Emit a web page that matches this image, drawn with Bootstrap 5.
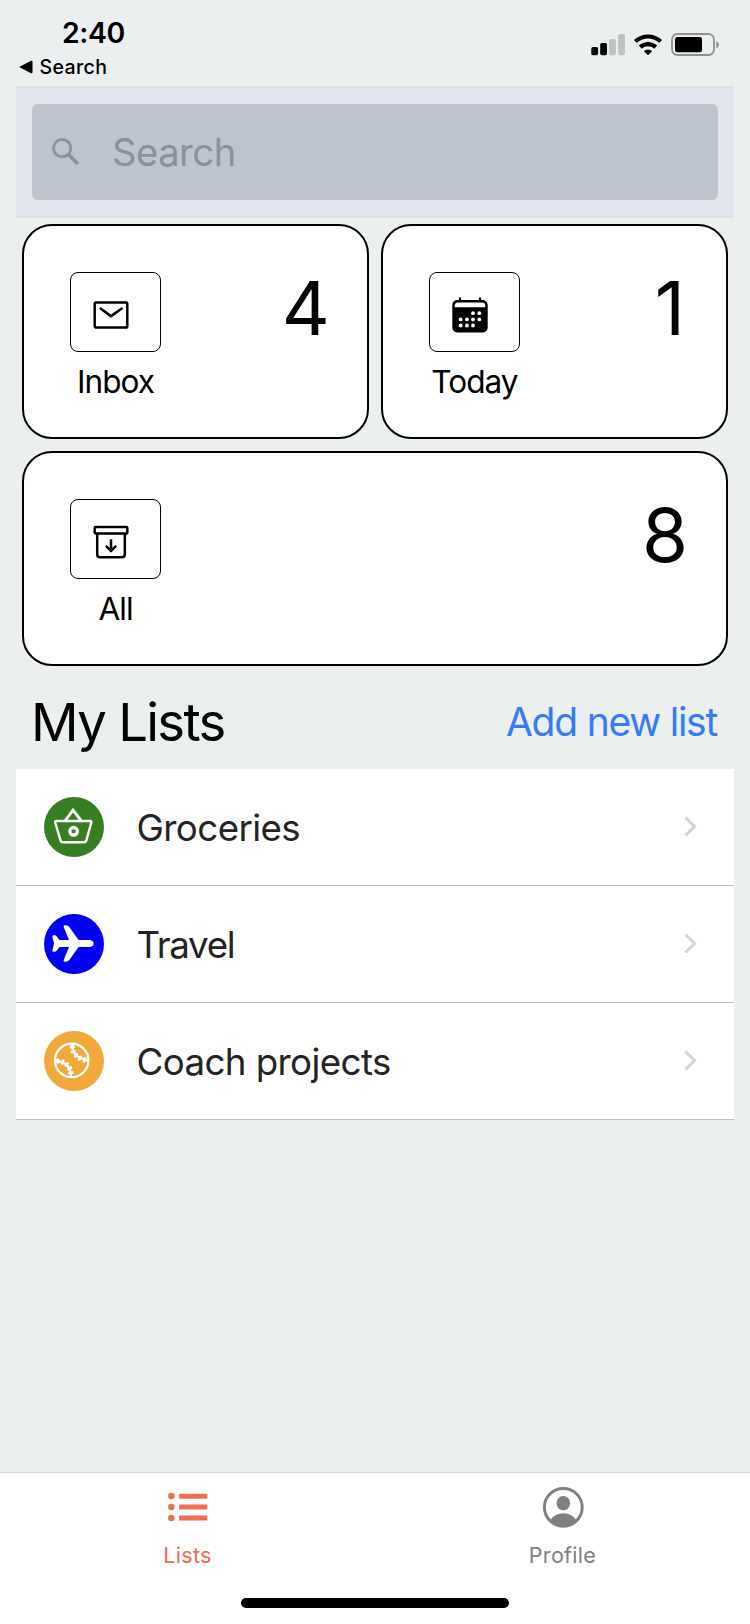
<!DOCTYPE html>
<html lang="en">
<head>
<meta charset="utf-8">
<meta name="viewport" content="width=device-width, initial-scale=1">
<title>My Lists</title>
<link rel="stylesheet" href="https://cdn.jsdelivr.net/npm/bootstrap@5.3.0/dist/css/bootstrap.min.css">
<style>
  body { background: #ebeff0; color: #000; font-family: Inter, "Liberation Sans", sans-serif; }
  svg { display: block; flex: none; }
  .status { height: 86px; padding: 15px 30px 0 19px; }
  .clock { font-size: 28.5px; font-weight: 600; line-height: 36px; padding-left: 43px; letter-spacing: -.44px; }
  .back-app { font-size: 19.5px; font-weight: 500; line-height: 24px; margin-top: 4px; gap: 6.500px; letter-spacing: .4px; }
  .status-icons { margin-top: 17px; }
  .search-wrap { background: #e1e6ee; border: solid #dfe1e4; border-width: 2px 0; height: 132px; padding: 16px; }
  .search-box { background: #bdc4cf; border-radius: 6px; height: 96px; padding: 0 19px; gap: 31px; color: #88929c; font-size: 38.2px; letter-spacing: -.5px; }
  .search-box span { padding-top: 1px; }
  .tiles { padding: 6px; }
  .tiles, .tiles-row { gap: 12px; }
  .tile { background: #fff; border: 2px solid #000; border-radius: 30px; height: 215px; padding: 46px 38px 0 46px; }
  .tile-inbox { padding-right: 37px; }
  .tile-today { padding-right: 41px; }
  .tile-icon { width: 91px; height: 80px; border: 1px solid #000; border-radius: 8px; padding: 22px 20px; }
  .tile-name { font-size: 31.6px; line-height: 40px; margin-top: 10px; letter-spacing: -1px; }
  .tile-count { font-size: 74.5px; line-height: 72px; }
  .lists-head { height: 97px; padding: 2px 17px 0 15px; }
  .lists-title { font-size: 52.7px; line-height: 60px; font-weight: 400; letter-spacing: -1.700px; }
  .add-link { font-size: 39px; color: #347bf7; line-height: 60px; letter-spacing: -1.230px; }
  .list-row { height: 117px; border: 0; border-bottom: 1px solid #bcbbc1; background: #fff; color: #242424; padding: 0 37px 0 28px; font-size: 36.7px; letter-spacing: -.6px; }
  .list-row span { padding-top: 2px; }
  .row-icon { width: 60px; height: 60px; margin-right: 32.500px; }
  .row-travel { letter-spacing: -1.300px; }
  .tabs { height: 152px; background: #fff; border-top: 1px solid #d8d8d8; }
  .tab-item { font-size: 21.5px; line-height: 28px; color: #808080; padding-top: 13px; gap: 13px; letter-spacing: .3px; }
  .tab-item.active { color: #ee6e50; }
  .home-bar { width: 268px; height: 10px; border-radius: 5px; background: #000; margin-bottom: 16px; }
</style>
</head>
<body>
<div class="d-flex flex-column vh-100 overflow-hidden">
  <header class="status d-flex justify-content-between align-items-start">
    <div>
      <div class="clock">2:40</div>
      <div class="back-app d-flex align-items-center">
        <svg width="14" height="14" viewBox="0 0 14 14"><path d="M1 6.4 12 .8q1.500-.6 1.500 1v10.400q0 1.600-1.500 1L1 7.600q-1-.6 0-1.200z"/></svg>
        <span>Search</span>
      </div>
    </div>
    <svg class="status-icons" width="130" height="26" viewBox="590 32 130 26">
      <rect x="591.3" y="47" width="6.800" height="8.300" rx="1.800"/>
      <rect x="600.2" y="43" width="6.800" height="12.300" rx="1.800"/>
      <g fill="#bfc1c2"><rect x="609.1" y="39" width="6.800" height="16.300" rx="1.800"/><rect x="618.2" y="34" width="6.800" height="21.300" rx="1.800"/></g>
      <g fill="none" stroke="#000" stroke-width="4.200"><path d="M635.3 41.600a18.400 18.400 0 0 1 25.400 0"/><path d="M640.300 47.100a11.400 11.400 0 0 1 15.400 0"/></g>
      <path d="M643.800 51q4.200-3 8.400 0l-3.300 3.500q-.9.800-1.800 0z"/>
      <rect x="672" y="34" width="42" height="21" rx="5.500" fill="none" stroke="#8f9192" stroke-width="1.800"/>
      <rect x="675" y="37" width="27" height="15.300" rx="2.500"/>
      <path d="M716.300 41.200q2.700 1.200 2.700 3.500t-2.700 3.500z" fill="#8f9192"/>
    </svg>
  </header>

  <main class="px-3 flex-grow-1">
    <div class="search-wrap">
      <div class="search-box d-flex align-items-center">
        <svg width="30" height="30" viewBox="0 0 30 30" fill="none" stroke="#88929c"><circle cx="11.200" cy="11.200" r="8.700" stroke-width="2.800"/><path d="m17 17 9.700 9.700" stroke-width="3.500"/></svg>
        <span>Search</span>
      </div>
    </div>

    <div class="tiles d-flex flex-column">
      <div class="tiles-row d-flex">
        <div class="tile tile-inbox d-flex justify-content-between align-items-start w-50">
          <div class="text-center">
            <div class="tile-icon"><svg width="40" height="40" viewBox="0 0 40 40" fill="none" stroke="#000" stroke-width="2.500"><rect x="3.700" y="7.500" width="32.600" height="25" rx="1.600"/><path d="m8.800 12.900 11.200 8.200 11.500-8.200"/></svg></div>
            <div class="tile-name">Inbox</div>
          </div>
          <div class="tile-count">4</div>
        </div>
        <div class="tile tile-today d-flex justify-content-between align-items-start w-50">
          <div class="text-center">
            <div class="tile-icon"><svg width="40" height="40" viewBox="0 0 40 40"><path d="M10 2.500V7M30 2.500V7" stroke="#000" stroke-width="2.200"/><rect x="2.300" y="5" width="35.400" height="32.400" rx="5"/><path d="M4.700 12.300v-1.300q0-3.400 3.400-3.400h23.800q3.400 0 3.400 3.400v1.300z" fill="#fff"/><g fill="#fff"><circle cx="23" cy="18.200" r="1.900"/><circle cx="29.300" cy="18.200" r="1.900"/><circle cx="10.700" cy="24.400" r="1.900"/><circle cx="16.900" cy="24.400" r="1.900"/><circle cx="23" cy="24.400" r="1.900"/><circle cx="29.300" cy="24.400" r="1.900"/><circle cx="10.700" cy="30.500" r="1.900"/><circle cx="16.900" cy="30.500" r="1.900"/><circle cx="23" cy="30.500" r="1.900"/></g></svg></div>
            <div class="tile-name">Today</div>
          </div>
          <div class="tile-count">1</div>
        </div>
      </div>
      <div class="tile d-flex justify-content-between align-items-start">
        <div class="text-center">
          <div class="tile-icon"><svg width="40" height="40" viewBox="0 0 40 40" fill="none" stroke="#000" stroke-width="2.500"><rect x="3.700" y="5" width="32.600" height="6.400" rx="1"/><path d="M6.200 11.400v20.800q0 3.100 3.100 3.100h21.400q3.100 0 3.100-3.100V11.400M20 17.300v11.500M14.900 23.900l5.100 5 5.100-5"/></svg></div>
          <div class="tile-name">All</div>
        </div>
        <div class="tile-count">8</div>
      </div>
    </div>

    <div class="lists-head d-flex justify-content-between align-items-center">
      <h1 class="lists-title m-0">My Lists</h1>
      <a href="#" class="add-link text-decoration-none">Add new list</a>
    </div>

    <div class="list-group rounded-0">
      <a href="#" class="list-group-item list-row d-flex align-items-center">
        <svg class="row-icon" viewBox="0 0 60 60" fill="none" stroke="#fff" stroke-width="2.400"><circle cx="30" cy="30" r="30" fill="#377e22" stroke="none"/><path d="M21.300 23.500 29 13.200l8 10.300" stroke-width="2.900"/><path d="M12.300 24h33.900q1.500 0 1.100 1.500l-4.900 17.700q-.6 2-2.600 2H19q-2 0-2.500-2l-5.300-17.700q-.4-1.500 1.100-1.500z"/><circle cx="29.600" cy="34.300" r="3.800" stroke-width="3.300"/></svg>
        <span>Groceries</span>
        <svg class="ms-auto" width="14" height="22" viewBox="0 0 14 22" fill="none" stroke="#d1d1d6" stroke-width="3"><path d="m2.500 1.500 9 9-9 9"/></svg>
      </a>
      <a href="#" class="list-group-item list-row row-travel d-flex align-items-center">
        <svg class="row-icon" viewBox="0 0 60 60"><circle cx="30" cy="30" r="30" fill="#0000f5"/><path fill="#fff" d="M45.500 26H34.600L25.300 13.100Q24 11.300 22 11.300h-1.300q-1.600 0-1 1.700L25 26h-9.500l-2.700-3.500q-.9-1.200-2.300-1.200h-.9q-1.500 0-1.200 1.500L10 29.500l-1.600 6.700q-.3 1.500 1.200 1.500h.9q1.400 0 2.300-1.200l2.700-3.500H25l-5.300 13q-.6 1.700 1 1.700H22q2 0 3.300-1.800L34.600 33h10.900q4.200-.6 4.200-3.500T45.500 26z"/></svg>
        <span>Travel</span>
        <svg class="ms-auto" width="14" height="22" viewBox="0 0 14 22" fill="none" stroke="#d1d1d6" stroke-width="3"><path d="m2.500 1.500 9 9-9 9"/></svg>
      </a>
      <a href="#" class="list-group-item list-row d-flex align-items-center">
        <svg class="row-icon" viewBox="0 0 60 60" fill="none" stroke="#fff" stroke-width="2.300"><circle cx="30" cy="30" r="30" fill="#f1a93b" stroke="none"/><circle cx="27.700" cy="29.400" r="16.700"/><path d="M28 13q0 13.500 16 16.500M11.500 30Q27 31 27 46"/><path stroke-width="5.200" stroke-dasharray="2.600 2.200" d="M28.200 14.500q0 12 15 15M12.500 30Q27 31 27 45"/></svg>
        <span>Coach projects</span>
        <svg class="ms-auto" width="14" height="22" viewBox="0 0 14 22" fill="none" stroke="#d1d1d6" stroke-width="3"><path d="m2.500 1.500 9 9-9 9"/></svg>
      </a>
    </div>
  </main>

  <nav class="tabs d-flex flex-column justify-content-between align-items-center">
    <div class="d-flex w-100">
      <a href="#" class="tab-item active w-50 d-flex flex-column align-items-center text-decoration-none">
        <svg width="42" height="42" viewBox="0 0 42 42" fill="currentColor"><circle cx="4.300" cy="10" r="3.200"/><circle cx="4.300" cy="21" r="3.200"/><circle cx="4.300" cy="32" r="3.200"/><path d="M12.100 7.700h28.200v5H12.100zM12.100 18.600h28.200v5H12.100zM12.100 29.500h28.200v5H12.100z"/></svg>
        <span>Lists</span>
      </a>
      <a href="#" class="tab-item w-50 d-flex flex-column align-items-center text-decoration-none">
        <svg width="42" height="42" viewBox="0 0 42 42" fill="currentColor"><circle cx="21.300" cy="21.300" r="18.900" fill="none" stroke="currentColor" stroke-width="3"/><ellipse cx="21.300" cy="17.200" rx="6.800" ry="7.200"/><path d="M8.300 34Q13 27.300 21.300 27.300T34.300 34Q29 40.500 21.300 40.500T8.300 34z"/></svg>
        <span>Profile</span>
      </a>
    </div>
    <div class="home-bar"></div>
  </nav>
</div>
<script src="https://cdn.jsdelivr.net/npm/bootstrap@5.3.0/dist/js/bootstrap.bundle.min.js"></script>
</body>
</html>
